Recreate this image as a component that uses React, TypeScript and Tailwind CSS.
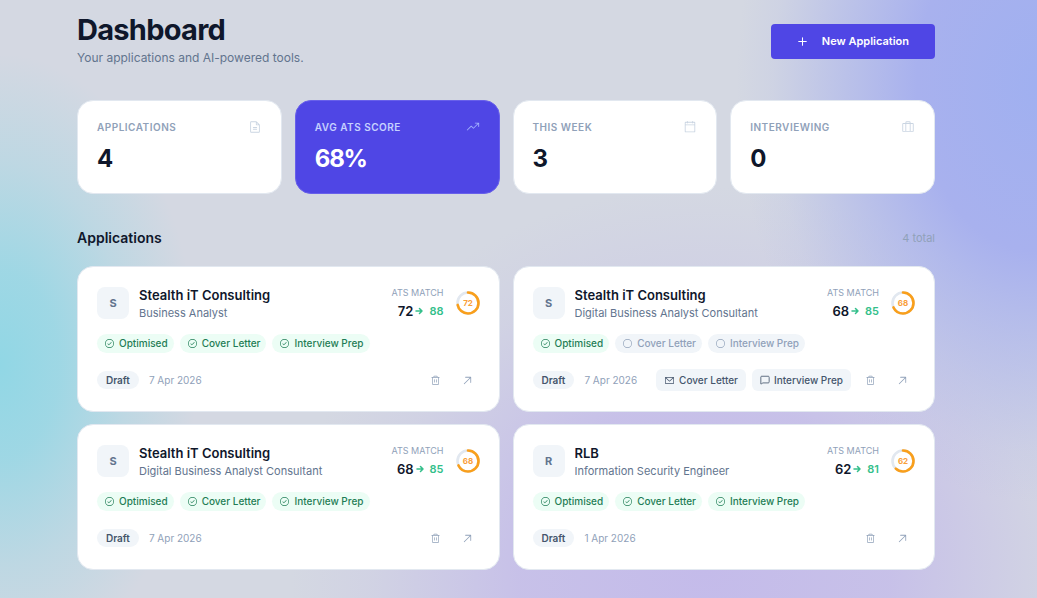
import { MessageSquare } from 'lucide-react';
import {
  PiArrowUpRight,
  PiCalendarBlank,
  PiCheckCircle,
  PiCircle,
  PiEnvelopeSimple,
  PiFileText,
  PiPlusBold,
  PiSuitcase,
  PiTrash,
  PiTrendUp,
} from 'react-icons/pi';

const stats = [
  { label: 'Applications', value: '4', icon: PiFileText },
  { label: 'Avg ATS Score', value: '68%', icon: PiTrendUp, active: true },
  { label: 'This Week', value: '3', icon: PiCalendarBlank },
  { label: 'Interviewing', value: '0', icon: PiSuitcase },
];

const applications = [
  { id: 1, company: 'Stealth iT Consulting', role: 'Business Analyst', before: 72, after: 88, date: '7 Apr 2026', ready: true },
  { id: 2, company: 'Stealth iT Consulting', role: 'Digital Business Analyst Consultant', before: 68, after: 85, date: '7 Apr 2026', ready: false },
  { id: 3, company: 'Stealth iT Consulting', role: 'Digital Business Analyst Consultant', before: 68, after: 85, date: '7 Apr 2026', ready: true },
  { id: 4, company: 'RLB', role: 'Information Security Engineer', before: 62, after: 81, date: '1 Apr 2026', ready: true },
];

function StatCard({ stat }: { stat: (typeof stats)[number] }) {
  const Icon = stat.icon;
  return (
    <div className={`rounded-2xl border px-[19px] py-[18px] ${stat.active ? 'border-[#6860ea] bg-[#4f46e5]' : 'border-slate-200 bg-white'}`}>
      <div className="flex items-center justify-between">
        <span className={`text-[10px] leading-4 font-semibold tracking-wider uppercase ${stat.active ? 'text-indigo-200' : 'text-slate-400'}`}>
          {stat.label}
        </span>
        <Icon className={`size-3.5 ${stat.active ? 'text-indigo-300' : 'text-slate-300'}`} />
      </div>
      <p className={`mt-2 text-2xl leading-8 font-bold tracking-tighter ${stat.active ? 'text-white' : 'text-slate-900'}`}>{stat.value}</p>
    </div>
  );
}

function ScoreRing({ score }: { score: number }) {
  return (
    <svg viewBox="0 0 24 24" className="size-6 shrink-0" role="img" aria-label={`Score ${score}`}>
      <circle cx="12" cy="12" r="10.5" fill="none" stroke="#e2e8f0" strokeWidth="2.6" />
      <circle
        cx="12"
        cy="12"
        r="10.5"
        fill="none"
        stroke="#f99f1b"
        strokeWidth="2.6"
        strokeLinecap="round"
        pathLength="100"
        strokeDasharray={`${score} 100`}
        transform="rotate(-90 12 12)"
      />
      <text x="12" y="15" textAnchor="middle" fontSize="8" fontWeight="700" fill="#f9a03a">
        {score}
      </text>
    </svg>
  );
}

function StatusPill({ label, done }: { label: string; done: boolean }) {
  const Icon = done ? PiCheckCircle : PiCircle;
  return (
    <span className={`flex items-center gap-1 rounded-full py-0.5 pr-1.5 pl-[7px] text-[10px] leading-[15px] font-medium ${done ? 'bg-[#ecfdf5] text-[#1f7d55]' : 'bg-slate-100 text-slate-400'}`}>
      <Icon className="size-[11px]" />
      {label}
    </span>
  );
}

function ApplicationCard({ app }: { app: (typeof applications)[number] }) {
  return (
    <article className="rounded-2xl border border-slate-200 bg-white px-[19px] pt-[18px] pb-5">
      <div className="flex items-center">
        <div className="flex size-8 shrink-0 items-center justify-center rounded-lg bg-slate-100 text-[11px] font-bold text-slate-500">
          {app.company[0]}
        </div>
        <div className="ml-2.5 min-w-0 flex-1">
          <h3 className="truncate text-[13px] leading-5 font-semibold text-slate-900">{app.company}</h3>
          <p className="truncate text-[11px] leading-4 text-slate-500">{app.role}</p>
        </div>
        <div className="mr-3 text-right">
          <p className="text-[9px] leading-4 text-slate-400 uppercase">ATS Match</p>
          <p className="flex items-center justify-end text-[13px] leading-5 font-semibold text-slate-900">
            {app.before}
            <svg viewBox="0 0 8 8" className="mr-1.5 ml-0.5 size-2 text-[#34bf8b]" fill="none" stroke="currentColor" strokeWidth="1.5" strokeLinecap="round" strokeLinejoin="round" aria-hidden="true">
              <path d="M1 4h6M4.5 1.5 7 4 4.5 6.5" />
            </svg>
            <span className="text-[11px] text-[#34bf8b]">{app.after}</span>
          </p>
        </div>
        <ScoreRing score={app.before} />
      </div>

      <div className="mt-[13px] flex gap-1.5">
        <StatusPill label="Optimised" done />
        <StatusPill label="Cover Letter" done={app.ready} />
        <StatusPill label="Interview Prep" done={app.ready} />
      </div>

      <div className="mt-4 flex h-[22px] items-center">
        <span className="rounded-full bg-slate-100 px-[9px] text-[10px] leading-[18px] font-semibold text-slate-600">Draft</span>
        <span className="ml-2.5 text-[10px] text-slate-400">{app.date}</span>
        <div className="ml-auto flex items-center">
          {!app.ready && (
            <div className="mr-2 flex gap-1.5">
              <button className="flex items-center gap-1 rounded-md bg-slate-100 px-2 text-[10px] leading-[22px] font-medium text-slate-600">
                <PiEnvelopeSimple className="size-[11px]" />
                Cover Letter
              </button>
              <button className="flex items-center gap-1 rounded-md bg-slate-100 px-2 text-[10px] leading-[22px] font-medium text-slate-600">
                <MessageSquare className="size-2.5" />
                Interview Prep
              </button>
            </div>
          )}
          <button aria-label="Delete application" className="p-1.5 text-slate-400">
            <PiTrash className="size-[11px]" />
          </button>
          <a href="#" aria-label="Open application" className="ml-2 p-1.5 text-slate-400">
            <PiArrowUpRight className="size-[13px]" />
          </a>
        </div>
      </div>
    </article>
  );
}

export default function App() {
  return (
    <div className="relative isolate min-h-screen overflow-hidden bg-[#d4d8e2] font-['Inter',sans-serif]">
      {/* Background glow */}
      <div className="absolute inset-0 -z-10 bg-[radial-gradient(ellipse_19%_52%_at_0%_61%,#91d7e5_0%,#91d7e5cc_30%,#91d7e555_65%,#91d7e500_100%),radial-gradient(ellipse_29%_70%_at_100%_14%,#a0b0f0_0%,#a8b1ee_40%,#a8b1ee80_68%,#a8b1ee20_88%,#a8b1ee00_100%),radial-gradient(ellipse_40%_64%_at_68%_95%,#c4bbea_0%,#c4bbeacc_45%,#c4bbea33_80%,#c4bbea00_100%)]" />

      <main className="w-full pt-3 pr-[102px] pb-7 pl-[77px]">
        <header className="flex items-center justify-between">
          <div>
            <h1 className="text-[29px] leading-9 font-bold tracking-tight text-slate-900">Dashboard</h1>
            <p className="text-xs leading-5 text-slate-500">Your applications and AI-powered tools.</p>
          </div>
          <button className="mt-0.5 flex h-[35px] items-center gap-3.5 rounded bg-[#4f46e5] px-[26px] text-[11px] font-semibold text-white">
            <PiPlusBold className="size-[11px]" />
            New Application
          </button>
        </header>

        <section className="mt-8 grid grid-cols-4 gap-[13px]">
          {stats.map((stat) => (
            <StatCard key={stat.label} stat={stat} />
          ))}
        </section>

        <section>
          <div className="mt-8 flex items-center justify-between">
            <h2 className="text-sm leading-6 font-semibold text-slate-900">Applications</h2>
            <span className="text-[11px] text-slate-400">4 total</span>
          </div>
          <div className="mt-4 grid grid-cols-2 gap-x-[13px] gap-y-3">
            {applications.map((app) => (
              <ApplicationCard key={app.id} app={app} />
            ))}
          </div>
        </section>
      </main>
    </div>
  );
}
